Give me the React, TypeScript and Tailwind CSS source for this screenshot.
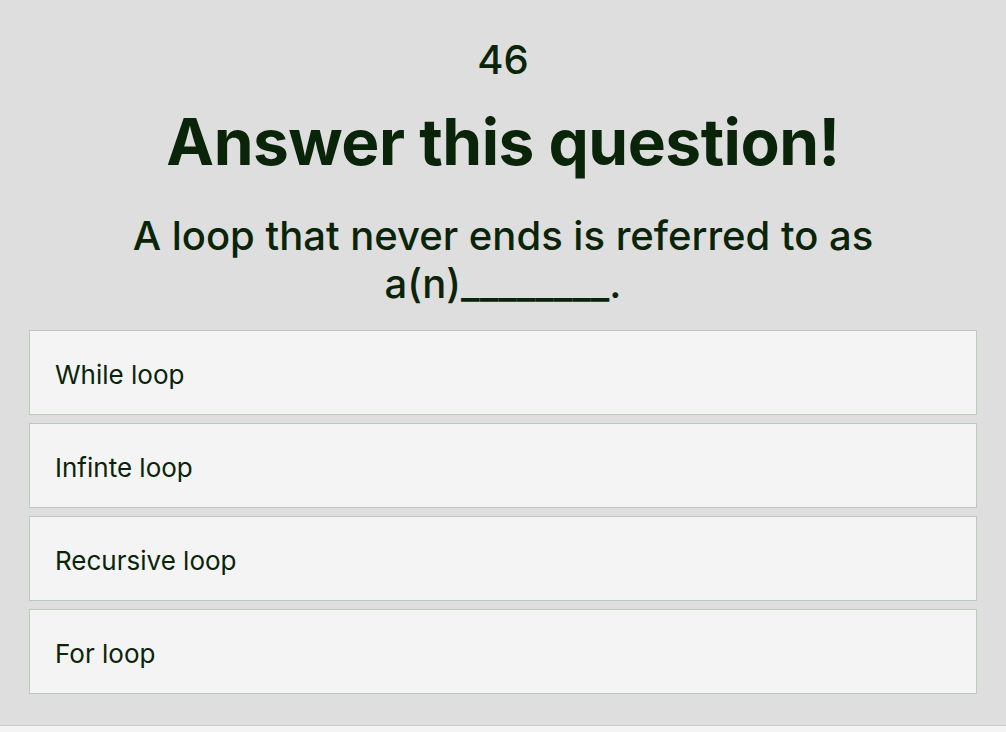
const options = ['While loop', 'Infinte loop', 'Recursive loop', 'For loop']

export default function App() {
  return (
    <div className="min-h-screen bg-[#f4f4f4] font-['Inter',sans-serif] text-[#0a2409]">
      <div className="bg-[#dedede] border-b border-[#cdcdcd] px-[29px] pt-[36px] pb-[31px]">
        <div className="text-center text-[40px] font-medium leading-[48px]">46</div>
        <h1 className="mt-[22px] text-center text-[64px] font-bold leading-[72px] tracking-[-0.5px]">
          Answer this question!
        </h1>
        <p className="mx-auto mt-[34px] max-w-[800px] text-center text-[40px] font-medium leading-[48px]">
          A loop that never ends is referred to as a(n)________.
        </p>
        <div className="mt-[22px] flex flex-col gap-[8px]">
          {options.map((o) => (
            <button
              key={o}
              className="h-[85px] border border-[#b9ccb9] bg-[#f4f4f4] px-[25px] pt-[3px] text-left text-[26px]"
            >
              {o}
            </button>
          ))}
        </div>
      </div>
    </div>
  )
}
